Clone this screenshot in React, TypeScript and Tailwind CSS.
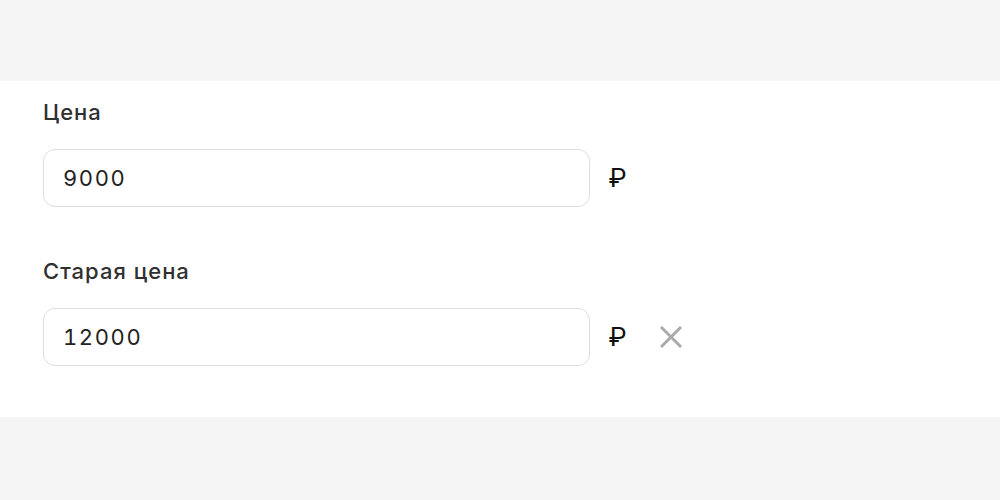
function ClearIcon() {
  return (
    <svg width="22" height="22" viewBox="0 0 22 22" fill="none" stroke="currentColor" strokeWidth="3" strokeLinecap="square">
      <path d="M2 2L20 20M20 2L2 20" />
    </svg>
  );
}

function PriceField({ label, value, clearable }: { label: string; value: string; clearable?: boolean }) {
  return (
    <div>
      <div className="font-['Inter',sans-serif] text-[22px] leading-[28px] font-medium tracking-[1px] text-[#303030]">{label}</div>
      <div className="mt-[23px] flex items-center">
        <input
          type="text"
          defaultValue={value}
          className="h-[58px] w-[547px] rounded-[12px] border border-[#dedede] bg-white px-[19px] font-['Inter',sans-serif] text-[22px] tabular-nums tracking-[1.6px] text-[#222222] outline-none"
        />
        <span className="ml-[19px] text-[26px] leading-none text-[#111111]">₽</span>
        {clearable && (
          <button className="ml-[34px] text-[#ababab]">
            <ClearIcon />
          </button>
        )}
      </div>
    </div>
  );
}

export default function App() {
  return (
    <div className="min-h-[500px] bg-[#f5f5f5] pt-[81px] font-['Roboto',sans-serif]">
      <div className="flex h-[336px] flex-col gap-[50px] bg-white px-[43px] pt-[17px]">
        <PriceField label="Цена" value="9000" />
        <PriceField label="Старая цена" value="12000" clearable />
      </div>
    </div>
  );
}
